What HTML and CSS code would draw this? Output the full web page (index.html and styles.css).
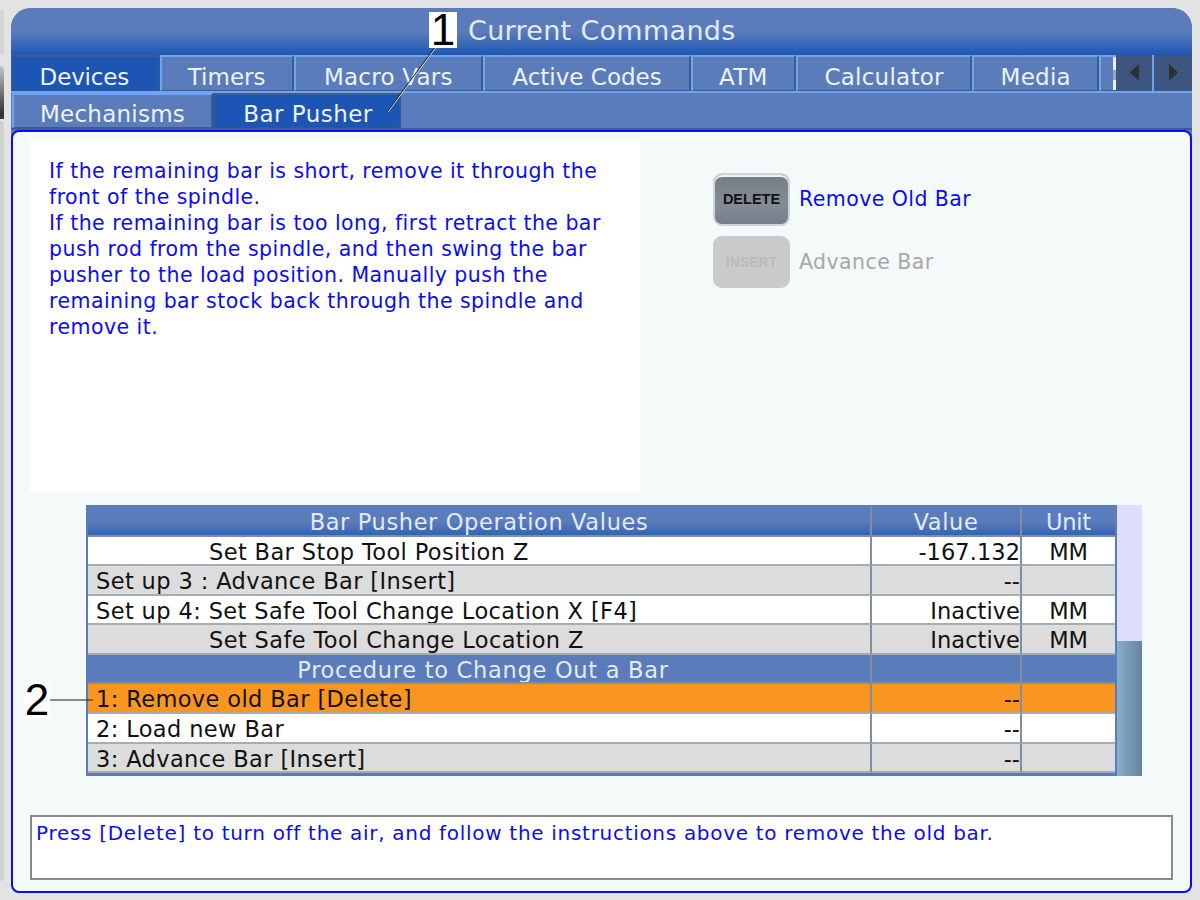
FILE: index.html
```html
<!DOCTYPE html>
<html lang="en">
<head>
<meta charset="utf-8">
<title>Current Commands</title>
<link rel="stylesheet" href="styles.css">
</head>
<body>
<div class="edge"><i class="edge-a"></i><i class="edge-b"></i><i class="edge-c"></i></div>
<main class="panel">
  <header class="title">Current Commands</header>
  <nav class="tabs">
    <div class="tab active t1">Devices</div>
    <div class="tab t2">Timers</div>
    <div class="tab t3">Macro Vars</div>
    <div class="tab t4">Active Codes</div>
    <div class="tab t5">ATM</div>
    <div class="tab t6">Calculator</div>
    <div class="tab t7">Media</div>
    <div class="tab t8"><span class="cut"></span></div>
    <div class="arrow"><svg width="9" height="17" viewBox="0 0 9 17"><path d="M9 0V17L0 8.5Z"/></svg></div>
    <div class="arrow"><svg width="9" height="17" viewBox="0 0 9 17"><path d="M0 0V17L9 8.5Z"/></svg></div>
  </nav>
  <nav class="subtabs">
    <div class="tab s1">Mechanisms</div>
    <div class="tab active s2">Bar Pusher</div>
  </nav>
  <section class="content">
    <div class="top">
      <div class="info">If the remaining bar is short, remove it through the<br>front of the spindle.<br>If the remaining bar is too long, first retract the bar<br>push rod from the spindle, and then swing the bar<br>pusher to the load position. Manually push the<br>remaining bar stock back through the spindle and<br>remove it.</div>
      <div class="actions">
        <div class="action"><span class="key key-on">DELETE</span><span class="label">Remove Old Bar</span></div>
        <div class="action off"><span class="key key-off">INSERT</span><span class="label">Advance Bar</span></div>
      </div>
    </div>
    <div class="table-wrap">
      <div class="table">
        <div class="row head"><div class="c name center">Bar Pusher Operation Values</div><div class="c val center">Value</div><div class="c unit">Unit</div></div>
        <div class="row white"><div class="c name ind">Set Bar Stop Tool Position Z</div><div class="c val">-167.132</div><div class="c unit">MM</div></div>
        <div class="row grey"><div class="c name">Set up 3 : Advance Bar [Insert]</div><div class="c val">--</div><div class="c unit"></div></div>
        <div class="row white"><div class="c name">Set up 4: Set Safe Tool Change Location X [F4]</div><div class="c val">Inactive</div><div class="c unit">MM</div></div>
        <div class="row grey"><div class="c name ind">Set Safe Tool Change Location Z</div><div class="c val">Inactive</div><div class="c unit">MM</div></div>
        <div class="row section"><div class="c name center">Procedure to Change Out a Bar</div><div class="c val"></div><div class="c unit"></div></div>
        <div class="row orange"><div class="c name">1: Remove old Bar [Delete]</div><div class="c val">--</div><div class="c unit"></div></div>
        <div class="row white"><div class="c name">2: Load new Bar</div><div class="c val">--</div><div class="c unit"></div></div>
        <div class="row grey"><div class="c name">3: Advance Bar [Insert]</div><div class="c val">--</div><div class="c unit"></div></div>
      </div>
      <div class="scroll"><div class="thumb"></div></div>
    </div>
    <div class="message">Press [Delete] to turn off the air, and follow the instructions above to remove the old bar.</div>
  </section>
</main>
<div class="callout n1">1</div>
<div class="callout n2">2</div>
<svg class="leaders" width="1200" height="900" viewBox="0 0 1200 900"><path class="halo" d="M435.5 48 388 112"/><path d="M434.5 48 387 112"/><path d="M50 700H93"/></svg>
</body>
</html>
```
FILE: styles.css
```css
* { box-sizing: border-box; }
html, body { margin: 0; height: 900px; overflow: hidden; }
body { background: #e3e3e3; font-family: "DejaVu Sans", sans-serif; position: relative; padding: 8px 8px 8px 11px; }
.edge { position: absolute; left: 0; top: 0; width: 4px; height: 900px; display: flex; flex-direction: column; }
.edge i { display: block; }
.edge-a { height: 45px; margin-top: 10px; background: #d4d4d4; border-radius: 0 4px 4px 0; }
.edge-b { height: 53px; margin-top: 11px; background: linear-gradient(#c4c4c4, #333 90%); border-radius: 0 4px 0 0; }
.edge-c { height: 760px; margin-top: 2px; background: #cfcfcf; border-radius: 0 4px 4px 0; }
.panel { width: 1181px; height: 884px; display: flex; flex-direction: column; background: #5a7cba; border-radius: 20px 20px 8px 8px; }
.title { height: 47px; flex: none; border-radius: 20px 20px 0 0; background: linear-gradient(#5a7cba 0, #5a7cba 50%, #1f57b4 100%); color: #e4eaf7; font-size: 27px; line-height: 46px; padding-left: 457px; letter-spacing: .3px; }
.tabs { height: 38px; flex: none; display: flex; border-bottom: 2px solid #6fa5f0; }
.subtabs { height: 37px; flex: none; display: flex; padding-left: 1px; border-bottom: 2px solid #3f5c8a; }
.tab { color: #eef2fb; font-size: 23px; letter-spacing: .25px; line-height: 40px; text-align: center; background: #5a7cba; border-top: 2px solid #6fa5f0; border-left: 2px solid #6fa5f0; border-right: 2px solid #3f5c8a; border-bottom: 1px solid #3f5c8a; white-space: nowrap; overflow: hidden; }
.tab.active { background: #1c55b3; border-color: #2a5a9e; border-top-color: #3f5c8a; }
.t1 { width: 149px; letter-spacing: -.15px; padding-right: 2px; }
.t2 { width: 134px; letter-spacing: 0; }
.t3 { width: 190px; }
.t4 { width: 208px; letter-spacing: 0; }
.t5 { width: 105px; }
.t6 { width: 177px; }
.t7 { width: 127px; }
.t8 { width: 17px; position: relative; border-right: 0; }
.cut { position: absolute; right: 0; top: 0; width: 3px; height: 36px; background: linear-gradient(#e8eefa 35%, #8ea4cc 35%, #8ea4cc 65%, #e8eefa 65%); }
.arrow { width: 38px; background: #3d5680; display: flex; align-items: center; justify-content: center; border-right: 2px solid #6fa5f0; padding-bottom: 2px; }
.arrow:last-child { border-right: 0; }
.arrow svg { fill: #2d2f33; display: block; }
.subtabs .tab { line-height: 39px; }
.s1 { width: 201px; }
.s2 { width: 188px; letter-spacing: .45px; padding-left: 2px; }
.content { flex: 1; background: #f4fafa; border: 2px solid #0c0cf4; border-radius: 8px; padding: 7px 17px 11px; display: flex; flex-direction: column; }
.top { display: flex; height: 352px; flex: none; }
.info { width: 610px; background: #fff; color: #0c0cf4; font-size: 20.5px; letter-spacing: .46px; line-height: 26px; padding: 19px 19px; white-space: nowrap; }
.actions { padding: 34px 0 0 73px; display: flex; flex-direction: column; gap: 10px; }
.action { display: flex; align-items: center; gap: 9px; height: 52.5px; color: #0c0cf4; font-size: 20.5px; letter-spacing: .43px; }
.action.off { color: #a8a8a8; }
.key { width: 77px; height: 52.5px; border-radius: 9px; display: flex; align-items: center; justify-content: center; font-weight: 700; flex: none; font-family: "Liberation Sans", sans-serif; letter-spacing: 0; }
.key-on { background: linear-gradient(#767b83 0, #838d98 60%, #747e89 100%); color: #111; border: 2px solid #cfd3d6; box-shadow: inset 0 2px 0 #f2f2f2; font-size: 14.5px; }
.key-off { background: #cacaca; color: #bbb; font-size: 14px; }
.table-wrap { display: flex; height: 271px; flex: none; margin: 14px 0 0 56px; width: 1056px; }
.table { width: 1031px; background: #5a7cba; padding: 2px 2px 3px 2px; display: flex; flex-direction: column; }
.row { flex: 1; display: grid; grid-template-columns: 784px 150px 93px; font-size: 22.5px; letter-spacing: .38px; color: #111; line-height: 24px; }
.c { border-right: 2px solid #7f8fa3; border-bottom: 2px solid #a4acb4; padding: 3px 0 0 8px; white-space: nowrap; overflow: hidden; }
.val { text-align: right; padding: 3px 0 0; letter-spacing: .05px; }
.unit { text-align: center; border-right: 0; padding: 3px 0 0; letter-spacing: -.2px; }
.ind { padding-left: 121px; }
.center { text-align: center; padding: 3px 0 0; letter-spacing: .62px; }
.white { background: #fff; }
.grey { background: #dcdcdc; }
.orange { background: #fa951f; }
.section { background: #5a7cba; color: #e4eaf7; }
.section .name { padding-left: 8px; letter-spacing: .72px; }
.head { background: linear-gradient(#5a7cba 0, #5a7cba 50%, #2a60b8 100%); color: #e4eaf7; }
.head .c, .section .c { border-bottom-color: #7f8fa3; }
.scroll { width: 25px; background: #dedeff; display: flex; flex-direction: column; justify-content: flex-end; }
.thumb { height: 135px; background: linear-gradient(90deg, #87afcb, #66839f); }
.message { margin-top: 39px; width: 1143px; height: 65px; background: #fff; border: 2px solid #8a8a8a; color: #0c0cf4; font-size: 20px; letter-spacing: .7px; line-height: 33px; padding: 0 4px; white-space: nowrap; }
.callout { position: absolute; background: #fff; color: #000; font-family: "Liberation Sans", sans-serif; font-size: 44px; line-height: 36px; text-align: center; }
.n1 { left: 429px; top: 12px; width: 28px; height: 36px; }
.n2 { left: 24px; top: 682px; width: 26px; height: 36px; }
.leaders { position: absolute; left: 0; top: 0; pointer-events: none; }
.leaders path { fill: none; stroke: #222; stroke-width: 1; }
.leaders .halo { stroke: #e6e6e6; }
```
